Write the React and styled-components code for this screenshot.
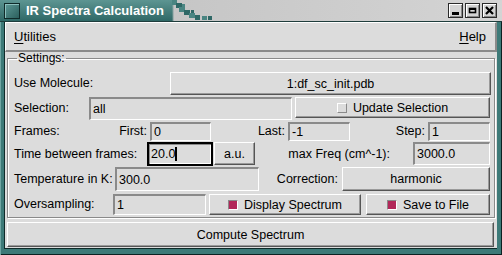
import styled, { createGlobalStyle } from "styled-components";

const GlobalStyle = createGlobalStyle`
  html, body { margin: 0; padding: 0; background: #2d5e5c; }
  body { font-family: "Liberation Sans", Arial, sans-serif; font-size: 12px; color: #000; }
`;

const Window = styled.div`
  width: 502px;
  height: 255px;
  display: flex;
  flex-direction: column;
  background: #3d7a78;
  box-shadow: inset 1px 1px 0 #6fa6a3, inset -1px -1px 0 #0c2222;
  overflow: hidden;
`;

const TitleBar = styled.div`
  height: 22px;
  display: flex;
  align-items: center;
  position: relative;
  background:
    linear-gradient(to right, rgba(0,0,0,0) 0, rgba(0,0,0,0) 172px, #c6c6c6 174px, #d4d4d4 100%),
    linear-gradient(#5d9592, #2f6866);
  border-bottom: 1px solid #1f3d3c;
`;

const TitleIcon = styled.div`
  width: 14px;
  height: 14px;
  margin: 0 6px 0 4px;
  background: linear-gradient(135deg, #5c9996, #2b5f5d);
  border: 1px solid #0f2a29;
  box-shadow: inset 1px 1px 0 #8cc0bd;
`;

const TitleText = styled.div`
  color: #fff;
  font-family: "Liberation Sans", Arial, sans-serif;
  font-weight: bold;
  font-size: 13px;
  position: relative;
  z-index: 1;
`;

const Dither = styled.svg`
  position: absolute;
  left: 160px;
  top: 0;
`;

const TitleButtons = styled.div`
  margin-left: auto;
  margin-right: 5px;
  display: flex;
  gap: 2px;
`;

const TitleButton = styled.div`
  width: 15px;
  height: 15px;
  box-sizing: border-box;
  background: #d4d4d4;
  border: 1px solid #2a2a2a;
  box-shadow: inset 1px 1px 0 #fff, inset -1px -1px 0 #888;
  display: flex;
  align-items: center;
  justify-content: center;
`;

const Client = styled.div`
  flex: 1;
  margin: 0 5px 6px 4px;
  background: #dcdcdc;
  display: flex;
  flex-direction: column;
  border-left: 1px solid #0f2a29;
  border-bottom: 1px solid #0f2a29;
`;

const MenuBar = styled.div`
  height: 27px;
  display: flex;
  align-items: center;
  justify-content: space-between;
  padding: 0 9px 0 8px;
  border-top: 1px solid #fff;
  border-left: 1px solid #fff;
  border-bottom: 2px solid #8a8a8a;
  border-right: 2px solid #8a8a8a;
  font-size: 13px;
`;

const MenuItem = styled.span`
  u { text-decoration: underline; text-underline-offset: 2px; }
`;

const Body = styled.div`
  flex: 1;
  display: flex;
  flex-direction: column;
  padding: 1px 2px 1px 2px;
  gap: 4px;
`;

const Frame = styled.fieldset`
  margin: 0;
  padding: 8px 3px 2px 6px;
  border: 1px solid #8a8a8a;
  box-shadow: inset 1px 1px 0 #fff, 1px 1px 0 #fff;
  display: flex;
  flex-direction: column;
`;

const Legend = styled.legend`
  padding: 0 1px;
  margin-left: 3px;
  font-size: 12px;
  line-height: 11px;
`;

const Row = styled.div`
  display: flex;
  align-items: flex-start;
  height: ${(p) => p.$h || 24}px;
`;

const Label = styled.span`
  width: ${(p) => (p.$w ? `${p.$w}px` : "auto")};
  height: ${(p) => p.$lh || 22}px;
  line-height: ${(p) => p.$lh || 22}px;
  flex: none;
  text-align: ${(p) => p.$align || "left"};
  padding-right: ${(p) => p.$pr || 0}px;
  box-sizing: border-box;
  white-space: nowrap;
  font-size: 12.5px;
`;

const Button = styled.div`
  width: ${(p) => p.$w}px;
  height: ${(p) => p.$h || 22}px;
  flex: none;
  box-sizing: border-box;
  display: flex;
  align-items: center;
  justify-content: center;
  gap: 6px;
  background: #dcdcdc;
  border-top: 1px solid #fff;
  border-left: 1px solid #fff;
  border-right: 1px solid #555;
  border-bottom: 1px solid #555;
  box-shadow: inset -1px -1px 0 #9a9a9a;
  font-size: 12.5px;
  margin-left: ${(p) => p.$ml || 0}px;
`;

const Entry = styled.div`
  width: ${(p) => p.$w}px;
  height: ${(p) => p.$h || 21}px;
  flex: none;
  box-sizing: border-box;
  display: flex;
  align-items: center;
  padding-left: 2px;
  background: #dcdcdc;
  border-top: 2px solid ${(p) => (p.$focus ? "#000" : "#8a8a8a")};
  border-left: 2px solid ${(p) => (p.$focus ? "#000" : "#8a8a8a")};
  border-right: ${(p) => (p.$focus ? "2px solid #000" : "1px solid #fff")};
  border-bottom: ${(p) => (p.$focus ? "2px solid #000" : "1px solid #fff")};
  box-shadow: ${(p) => (p.$focus ? "inset 1px 1px 0 #8a8a8a, inset -1px -1px 0 #fff" : "none")};
  font-size: 12.5px;
  margin-left: ${(p) => p.$ml || 0}px;
`;

const Caret = styled.span`
  display: inline-block;
  width: 2px;
  height: 14px;
  background: #000;
`;

const Indicator = styled.span`
  width: 10px;
  height: 10px;
  box-sizing: border-box;
  flex: none;
  background: ${(p) => (p.$on ? "#b2285a" : "#dcdcdc")};
  border-top: 1px solid ${(p) => (p.$on ? "#8a8a8a" : "#fff")};
  border-left: 1px solid ${(p) => (p.$on ? "#8a8a8a" : "#fff")};
  border-right: 1px solid ${(p) => (p.$on ? "#fff" : "#8a8a8a")};
  border-bottom: 1px solid ${(p) => (p.$on ? "#fff" : "#8a8a8a")};
`;

function Dithering() {
  // teal blocks stepping down into the grey part of the title bar
  const cells = [
    [12, 0, 5, 5], [16, 3, 6, 5], [19, 7, 6, 5], [24, 10, 6, 5], [29, 13, 6, 5],
    [35, 15, 5, 5], [42, 16, 5, 4], [48, 16, 4, 4], [22, 4, 3, 3], [31, 10, 3, 3],
  ];
  return (
    <Dither width="60" height="22" viewBox="0 0 60 22">
      {cells.map(([x, y, w, h], i) => (
        <rect key={i} x={x} y={y} width={w} height={h} fill={i % 2 ? "#2f6866" : "#4a8582"} />
      ))}
    </Dither>
  );
}

export default function App() {
  return (
    <>
      <GlobalStyle />
      <Window>
        <TitleBar>
          <TitleIcon />
          <TitleText>IR Spectra Calculation</TitleText>
          <Dithering />
          <TitleButtons>
            <TitleButton>
              <svg width="9" height="9" viewBox="0 0 9 9"><rect x="1" y="6" width="7" height="3" fill="#000" /></svg>
            </TitleButton>
            <TitleButton>
              <svg width="9" height="9" viewBox="0 0 9 9"><rect x="1.5" y="2.5" width="6" height="4" fill="none" stroke="#000" strokeWidth="1.6" /><rect x="1" y="2" width="7" height="2" fill="#000" /></svg>
            </TitleButton>
            <TitleButton>
              <svg width="9" height="9" viewBox="0 0 9 9"><path d="M1 1 L8 8 M8 1 L1 8" stroke="#000" strokeWidth="2.2" /></svg>
            </TitleButton>
          </TitleButtons>
        </TitleBar>
        <Client>
          <MenuBar>
            <MenuItem><u>U</u>tilities</MenuItem>
            <MenuItem><u>H</u>elp</MenuItem>
          </MenuBar>
          <Body>
            <Frame>
              <Legend>Settings:</Legend>
              <Row $h={25}>
                <Label $w={156} $lh={23}>Use Molecule:</Label>
                <Button $w={321} $h={23}>1:df_sc_init.pdb</Button>
              </Row>
              <Row $h={25}>
                <Label $w={75} $lh={23}>Selection:</Label>
                <Entry $w={203} $h={23}>all</Entry>
                <Button $w={195} $h={21} $ml={3}>
                  <Indicator />
                  Update Selection
                </Button>
              </Row>
              <Row $h={20}>
                <Label $w={75} $lh={19}>Frames:</Label>
                <Label $w={61} $lh={19} $align="right" $pr={3}>First:</Label>
                <Entry $w={61} $h={19}>0</Entry>
                <Label $w={77} $lh={19} $align="right" $pr={3}>Last:</Label>
                <Entry $w={62} $h={19}>-1</Entry>
                <Label $w={78} $lh={19} $align="right" $pr={3}>Step:</Label>
                <Entry $w={62} $h={19}>1</Entry>
              </Row>
              <Row $h={25}>
                <Label $w={133} $lh={24}>Time between frames:</Label>
                <Entry $w={66} $h={24} $focus>20.0<Caret /></Entry>
                <Button $w={41} $h={23} $ml={1}>a.u.</Button>
                <Label $w={158} $lh={24} $align="right" $pr={23}>max Freq (cm^-1):</Label>
                <Entry $w={77} $h={23}>3000.0</Entry>
              </Row>
              <Row $h={27}>
                <Label $w={101} $lh={24}>Temperature in K:</Label>
                <Entry $w={144} $h={24}>300.0</Entry>
                <Label $w={83} $lh={24} $align="right" $pr={4}>Correction:</Label>
                <Button $w={148} $h={24}>harmonic</Button>
              </Row>
              <Row $h={21}>
                <Label $w={99} $lh={21}>Oversampling:</Label>
                <Entry $w={93} $h={21}>1</Entry>
                <Button $w={152} $h={21} $ml={3}>
                  <Indicator $on />
                  Display Spectrum
                </Button>
                <Button $w={124} $h={21} $ml={5}>
                  <Indicator $on />
                  Save to File
                </Button>
              </Row>
            </Frame>
            <Button $w={487} $h={25}>Compute Spectrum</Button>
          </Body>
        </Client>
      </Window>
    </>
  );
}
